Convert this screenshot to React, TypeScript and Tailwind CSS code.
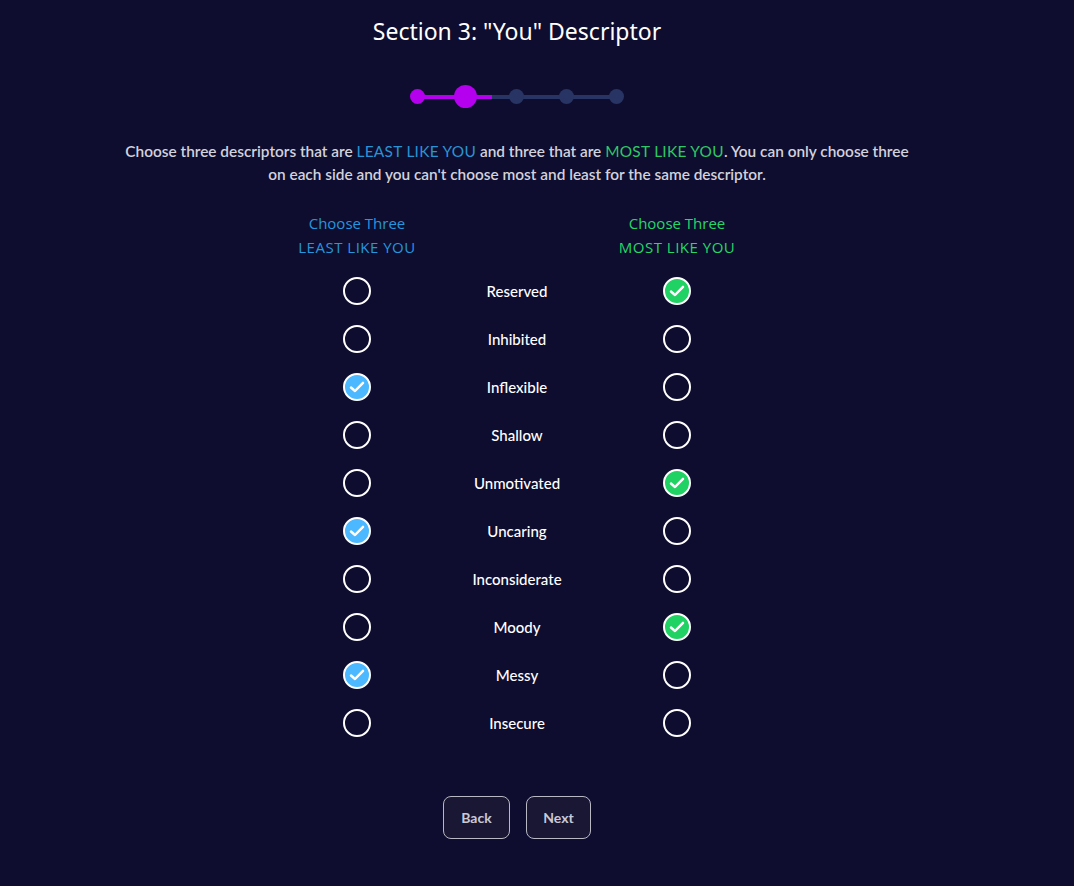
import React from "react";

const rows: { name: string; least: boolean; most: boolean }[] = [
  { name: "Reserved", least: false, most: true },
  { name: "Inhibited", least: false, most: false },
  { name: "Inflexible", least: true, most: false },
  { name: "Shallow", least: false, most: false },
  { name: "Unmotivated", least: false, most: true },
  { name: "Uncaring", least: true, most: false },
  { name: "Inconsiderate", least: false, most: false },
  { name: "Moody", least: false, most: true },
  { name: "Messy", least: true, most: false },
  { name: "Insecure", least: false, most: false },
];

function Check() {
  return (
    <svg width="20" height="20" viewBox="0 0 20 20" fill="none">
      <path d="M4 10.5 L8 14 L16 5.8" stroke="white" strokeWidth="2.5" strokeLinecap="round" strokeLinejoin="round" />
    </svg>
  );
}

function Circle({ checked, kind }: { checked: boolean; kind: "least" | "most" }) {
  if (!checked) {
    return <div className="w-[28px] h-[28px] rounded-full border-2 border-white" />;
  }
  return (
    <div
      className={
        "w-[28px] h-[28px] rounded-full border-2 border-white flex items-center justify-center " +
        (kind === "least" ? "bg-[#4cb8ff]" : "bg-[#20d163]")
      }
    >
      <Check />
    </div>
  );
}

export default function App() {
  return (
    <div className="min-h-[886px] w-full bg-[#0e0d2f] pr-[40px] text-white" style={{ fontFamily: "Lato, 'Open Sans', sans-serif" }}>
      <div className="flex flex-col items-center">
        <h1 className="mt-[16px] text-[23px] leading-[30px] font-normal text-white" style={{ fontFamily: "'Noto Sans', 'Open Sans', sans-serif" }}>
          Section 3: "You" Descriptor
        </h1>

        <div className="mt-[39px] relative w-[215px] h-[23px] flex items-center">
          <div className="absolute left-[7px] w-[200px] top-[10px] h-[4px] bg-[#283463]" />
          <div className="absolute left-[7px] w-[75px] top-[10px] h-[4px] bg-[#b400ee]" />
          <div className="relative flex items-center">
            <div className="w-[15px] h-[15px] rounded-full bg-[#b400ee]" />
            <div className="w-[23px] h-[23px] rounded-full bg-[#b400ee] ml-[29px]" />
            <div className="w-[15px] h-[15px] rounded-full bg-[#283463] ml-[32px]" />
            <div className="w-[15px] h-[15px] rounded-full bg-[#283463] ml-[35px]" />
            <div className="w-[15px] h-[15px] rounded-full bg-[#283463] ml-[35px]" />
          </div>
        </div>

        <p className="mt-[32px] w-[800px] text-center text-[15.4px] leading-[23px] font-semibold text-[#d2d2dc]">
          Choose three descriptors that are{" "}
          <span className="text-[#2a93d5] font-normal tracking-[0.3px]">LEAST LIKE YOU</span> and three that are{" "}
          <span className="text-[#2ec866] font-normal tracking-[0.3px]">MOST LIKE YOU</span>. You can only choose three
          <br />
          on each side and you can't choose most and least for the same descriptor.
        </p>

        <div className="mt-[25px] grid grid-cols-[160px_160px_160px] text-[15px]" style={{ fontFamily: "'Open Sans', Lato, sans-serif" }}>
          <div className="flex flex-col items-center text-[#2596dd] leading-[24px]">
            <span>Choose Three</span>
            <span className="tracking-[0.5px]">LEAST LIKE YOU</span>
          </div>
          <div />
          <div className="flex flex-col items-center text-[#25d768] leading-[24px]">
            <span>Choose Three</span>
            <span className="tracking-[0.5px]">MOST LIKE YOU</span>
          </div>
        </div>

        <div className="mt-[8px] flex flex-col">
          {rows.map((r) => (
            <div key={r.name} className="grid grid-cols-[160px_160px_160px] h-[48px] items-center">
              <div className="flex justify-center">
                <Circle checked={r.least} kind="least" />
              </div>
              <div className="text-center text-[15px] font-medium text-white" style={{ fontFamily: "Lato, sans-serif" }}>
                {r.name}
              </div>
              <div className="flex justify-center">
                <Circle checked={r.most} kind="most" />
              </div>
            </div>
          ))}
        </div>

        <div className="mt-[49px] flex gap-[16px]">
          <button className="w-[67px] h-[43px] rounded-[8px] border border-[#b8b8c4] bg-[#191734] text-[14px] font-bold text-[#c9c9d4]">
            Back
          </button>
          <button className="w-[65px] h-[43px] rounded-[8px] border border-[#b8b8c4] bg-[#191734] text-[14px] font-bold text-[#c9c9d4]">
            Next
          </button>
        </div>
      </div>
    </div>
  );
}
